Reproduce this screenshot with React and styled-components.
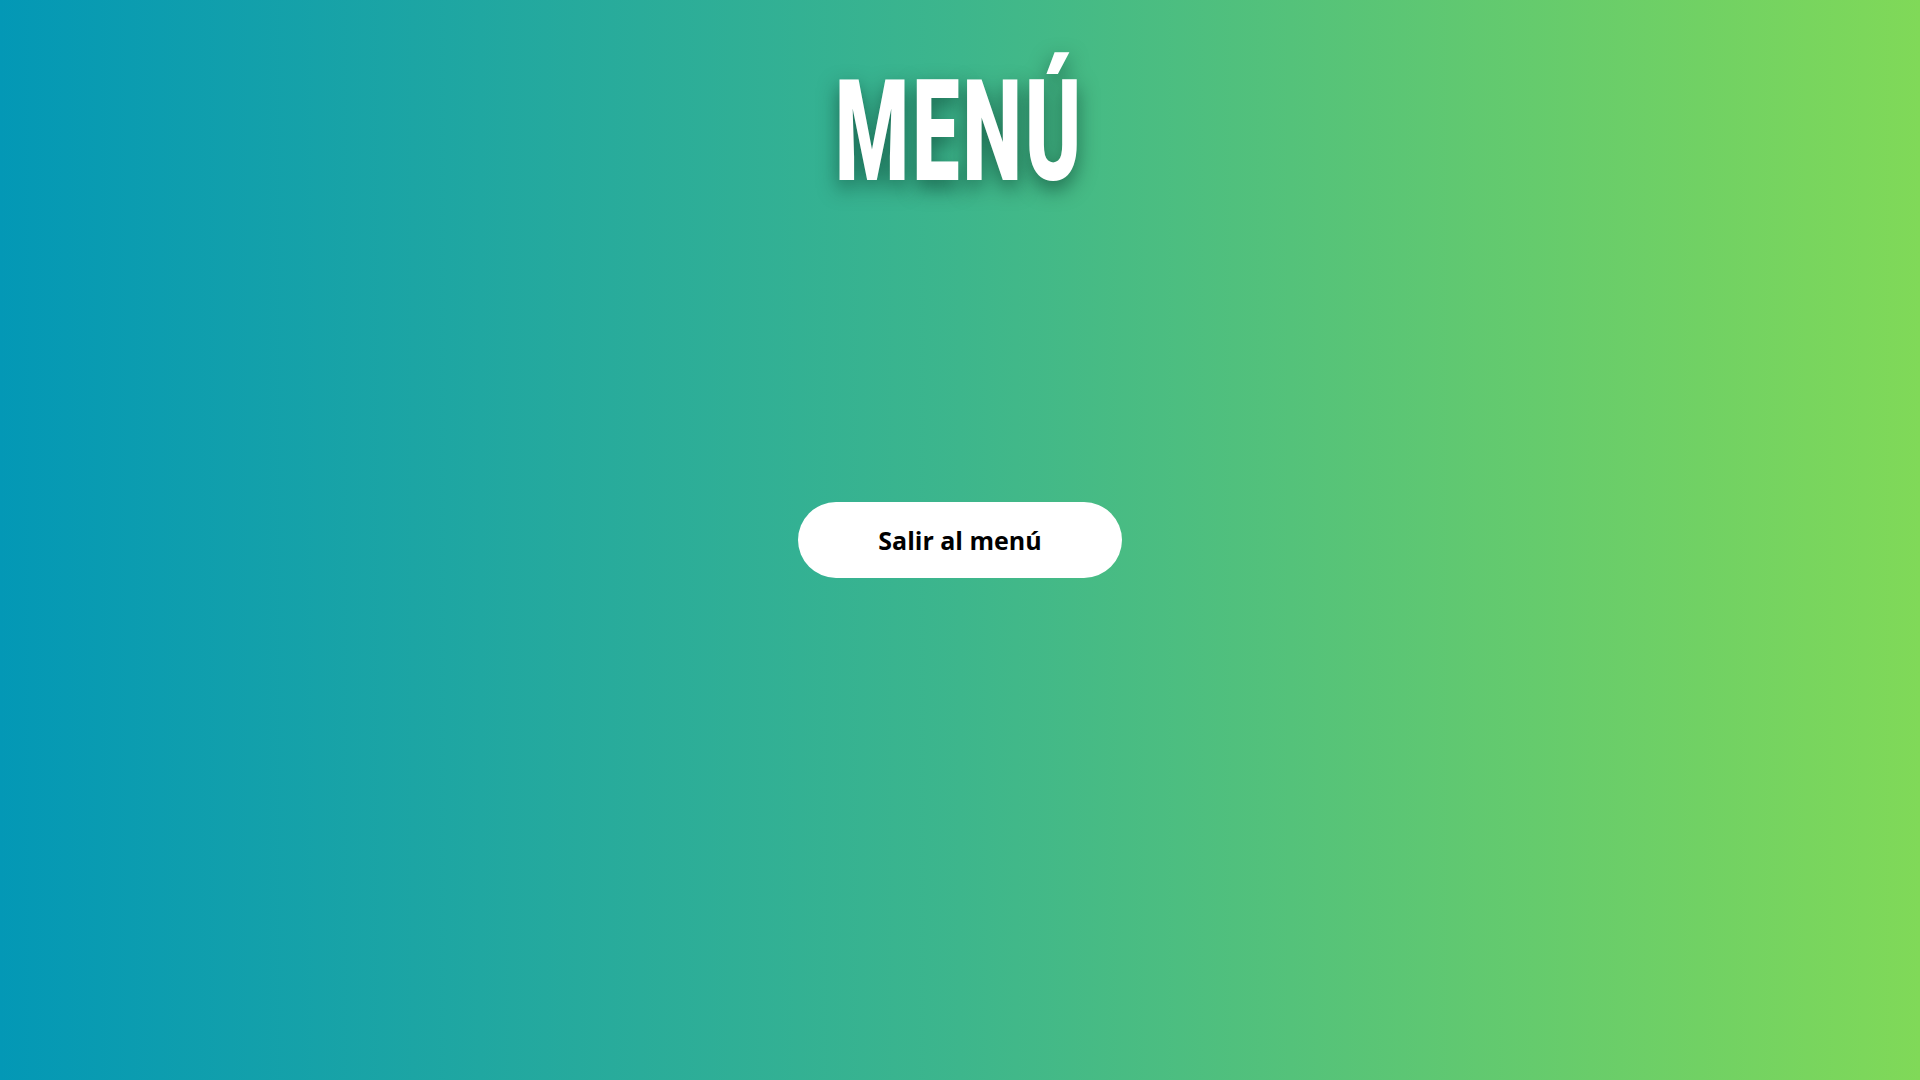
import React from "react";
import styled, { createGlobalStyle } from "styled-components";

const Global = createGlobalStyle`
  html, body { margin: 0; padding: 0; }
  body { font-family: "Open Sans", sans-serif; }
  #root { min-height: 100vh; }
`;

const Page = styled.div`
  min-height: 100vh;
  display: grid;
  grid-template-rows: 200px 1fr;
  background: linear-gradient(to right, #0398b6 0%, #3db68c 50%, #80d958 100%);
`;

const Header = styled.header`
  display: flex;
  justify-content: center;
  align-items: flex-start;
  padding-top: 61px;
`;

const Title = styled.h1`
  margin: 0;
  font-family: "Roboto", "Liberation Sans", sans-serif;
  font-weight: 900;
  font-size: 141px;
  line-height: 1;
  color: #ffffff;
  letter-spacing: 5px;
  display: inline-block;
  transform: scaleX(0.6);
  text-shadow: 0 8px 26px rgba(0, 40, 30, 0.55);
`;

const Main = styled.main`
  display: flex;
  justify-content: center;
  align-items: center;
  padding-bottom: 200px;
`;

const ExitButton = styled.button`
  width: 324px;
  height: 76px;
  border: none;
  border-radius: 38px;
  background: #ffffff;
  color: #000000;
  font-family: "Open Sans", sans-serif;
  font-weight: 700;
  font-size: 25px;
  cursor: pointer;
`;

export default function App() {
  return (
    <>
      <Global />
      <Page>
        <Header>
          <Title>MENÚ</Title>
        </Header>
        <Main>
          <ExitButton>Salir al menú</ExitButton>
        </Main>
      </Page>
    </>
  );
}
